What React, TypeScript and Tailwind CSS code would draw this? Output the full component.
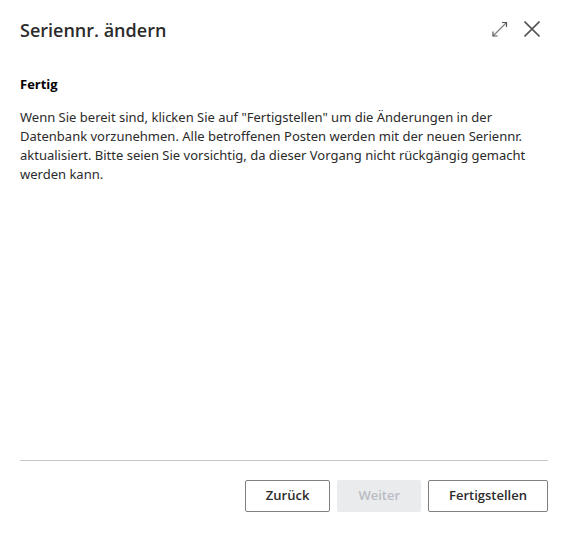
import React from "react";

const App = () => {
  return (
    <main className="flex min-h-screen flex-col bg-white px-5 pt-4 pb-[23px] font-['Noto_Sans','Open_Sans',sans-serif] text-[#2b2b2b]">
      <header className="flex items-center justify-between">
        <h1 className="font-['Open_Sans','Noto_Sans',sans-serif] text-lg leading-7 font-semibold">Seriennr. ändern</h1>
        <div className="flex items-center gap-4 pr-2 pb-0.5 text-[#555555]">
          <button type="button" aria-label="Vergrößern">
            <svg width="16" height="16" viewBox="0 0 16 16" fill="none" stroke="currentColor">
              <path strokeWidth="1.2" stroke="#808080" d="M1 15L14.5 1.5" />
              <path strokeWidth="1.2" d="M10 1.5H14.5V6M1 10.5V15H5.5" />
            </svg>
          </button>
          <button type="button" aria-label="Schließen">
            <svg width="16" height="16" viewBox="0 0 16 16" fill="none" stroke="currentColor" strokeWidth="1.6">
              <path d="M0.5 0.5L15.5 15.5M15.5 0.5L0.5 15.5" />
            </svg>
          </button>
        </div>
      </header>

      <section className="mt-7 grow">
        <h2 className="font-['Open_Sans','Noto_Sans',sans-serif] text-[13px] leading-6 font-bold text-black">Fertig</h2>
        <p className="mt-3 text-[13px] leading-[19px]">
          Wenn Sie bereit sind, klicken Sie auf "Fertigstellen" um die Änderungen in der Datenbank vorzunehmen. Alle
          betroffenen Posten werden mit der neuen Seriennr. aktualisiert. Bitte seien Sie vorsichtig, da dieser Vorgang
          nicht rückgängig gemacht werden kann.
        </p>
      </section>

      <footer className="flex justify-end gap-[7px] border-t border-[#c6c6c6] pt-[19px] font-['Open_Sans','Noto_Sans',sans-serif] text-[13px] font-semibold">
        <button type="button" className="h-8 rounded-xs border border-[#808080] px-5">
          Zurück
        </button>
        <button type="button" disabled className="h-8 rounded-xs border border-[#eaebed] bg-[#eaebed] px-5 text-[#b9bcc2]">
          Weiter
        </button>
        <button type="button" className="h-8 rounded-xs border border-[#808080] px-5">
          Fertigstellen
        </button>
      </footer>
    </main>
  );
};

export default App;
